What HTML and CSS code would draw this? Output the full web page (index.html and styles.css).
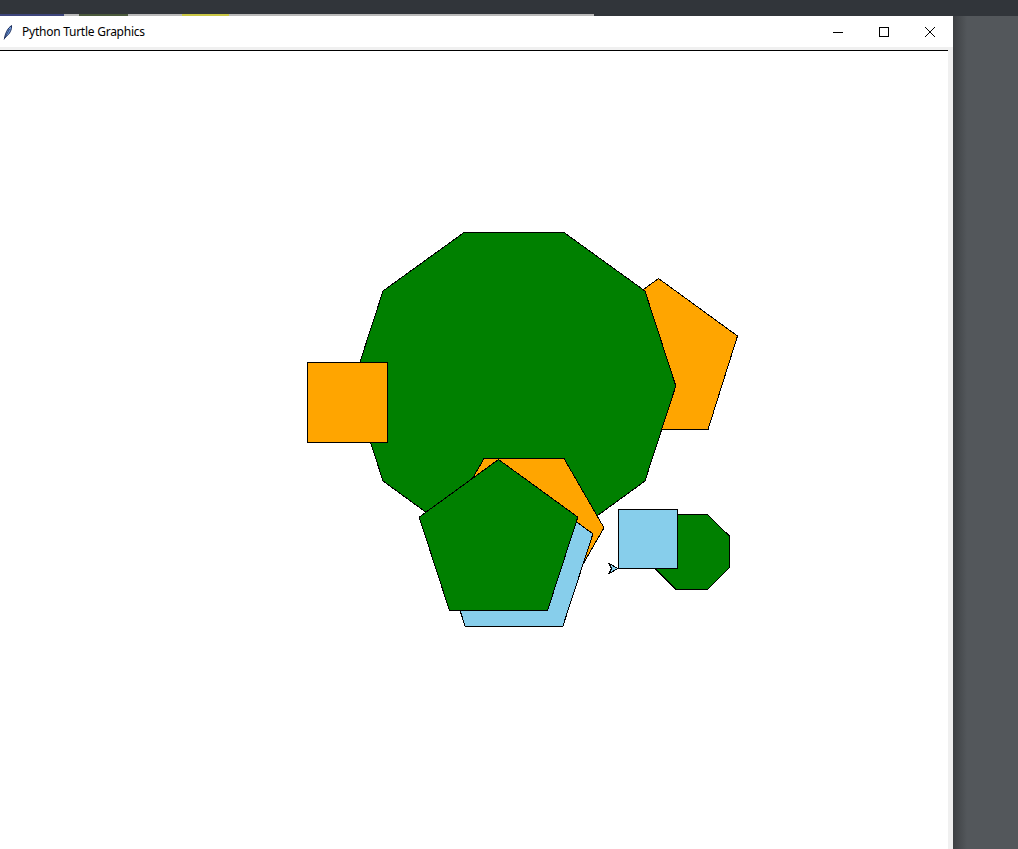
FILE: index.html
```html
<!DOCTYPE html>
<html>
<head>
<meta charset="utf-8">
<title>Python Turtle Graphics</title>
<link rel="stylesheet" href="styles.css">
</head>
<body>
<div class="topbar">
  <div class="tabs">
    <span class="tab tab-blue"></span>
    <span class="tab tab-grey w15"></span>
    <span class="tab tab-green"></span>
    <span class="tab tab-grey w54"></span>
    <span class="tab tab-yellow"></span>
    <span class="tab tab-grey w365"></span>
  </div>
</div>
<div class="main">
  <div class="window">
    <div class="titlebar">
      <svg class="app-icon" width="10" height="16" viewBox="0 0 10 16">
        <path d="M1.5 14.5 C2 10 4.5 4 8.5 1.5 C9 5.5 6.5 10.5 3 12.5 Z" fill="#6f9de0" stroke="#1f2f5c" stroke-width="1"/>
        <path d="M1 15.5 L6.5 5" stroke="#1f2f5c" stroke-width="0.8"/>
      </svg>
      <span class="title">Python Turtle Graphics</span>
      <div class="controls">
        <div class="ctl">
          <svg width="10" height="10" viewBox="0 0 10 10"><path d="M0 5.5 H10" stroke="#000" stroke-width="1"/></svg>
        </div>
        <div class="ctl">
          <svg width="10" height="10" viewBox="0 0 10 10"><rect x="0.5" y="0.5" width="9" height="9" fill="none" stroke="#000" stroke-width="1"/></svg>
        </div>
        <div class="ctl">
          <svg width="10" height="10" viewBox="0 0 10 10"><path d="M0 0 L10 10 M10 0 L0 10" stroke="#000" stroke-width="1"/></svg>
        </div>
      </div>
    </div>
    <div class="client">
      <div class="canvas">
        <svg class="drawing" width="948" height="798" viewBox="0 51 948 798">
          <polygon class="orange" points="610,429.5 708,429.5 737.5,336 658.5,278.5 579.5,336"/>
          <polygon class="green" points="675.8,386 644.9,290.9 564,232.5 464,232.5 383.1,290.9 352.2,386 383.1,481.1 464,539.9 564,539.9 644.9,481.1"/>
          <rect class="orange" x="307.5" y="362.5" width="80" height="80"/>
          <polygon class="orange" points="484,458.5 564,458.5 604,527.8 564,597.1 484,597.1 444,527.8"/>
          <polygon class="blue" points="465.25,626.5 562.75,626.5 592.9,533.8 514,476.5 435.1,533.8"/>
          <polygon class="green" points="498.5,459.5 577.8,517.1 547.5,610.5 449.5,610.5 419.2,517.1"/>
          <polygon class="green" points="676,589.5 707.3,589.5 729.5,567.4 729.5,536.1 707.3,514.5 676,514.5 653.9,536.1 653.9,567.4"/>
          <rect class="blue" x="618.5" y="509.5" width="59" height="59"/>
          <polygon class="blue" points="618,568.5 609,563.5 611.5,568.5 609,573.5"/>
        </svg>
      </div>
    </div>
  </div>
  <div class="desk"></div>
</div>
</body>
</html>
```

FILE: styles.css
```css
html, body {
  margin: 0;
  padding: 0;
}
body {
  width: 1018px;
  height: 849px;
  overflow: hidden;
  background: #53575b;
  font-family: "Noto Sans", "Liberation Sans", sans-serif;
}
.topbar {
  height: 16px;
  background: #31353a;
  display: flex;
  align-items: flex-end;
}
.tabs {
  display: flex;
  height: 2px;
}
.tab {
  display: block;
  height: 2px;
}
.tab-blue { width: 64px; background: #3d457c; }
.tab-green { width: 49px; background: #4b5a3c; }
.tab-yellow { width: 47px; background: #c9c645; }
.tab-grey { background: #b9b9b9; }
.w15 { width: 15px; }
.w54 { width: 54px; }
.w365 { width: 365px; }

.main {
  display: flex;
  height: 833px;
}
.window {
  width: 953px;
  display: flex;
  flex-direction: column;
  background: #fff;
}
.titlebar {
  height: 31px;
  display: flex;
  align-items: center;
  background: #fff;
}
.app-icon {
  margin-left: 3px;
  display: block;
}
.title {
  margin-left: 9px;
  font-size: 12px;
  letter-spacing: -0.25px;
  color: #000;
}
.controls {
  margin-left: auto;
  display: flex;
}
.ctl {
  width: 46px;
  height: 31px;
  display: flex;
  align-items: center;
  justify-content: center;
}
.ctl svg { display: block; }
.client {
  flex: 1;
  background: #f0f0f0;
  padding: 3px 5px 0 0;
  display: flex;
  min-height: 0;
}
.canvas {
  flex: 1;
  background: #fff;
  border-top: 1px solid #000;
  overflow: hidden;
}
.drawing {
  display: block;
  shape-rendering: crispEdges;
}
.drawing polygon, .drawing rect {
  stroke: #000;
  stroke-width: 1;
}
.green { fill: #008000; }
.orange { fill: #ffa500; }
.blue { fill: #87ceeb; }
.desk {
  flex: 1;
  background: linear-gradient(to right, #3d4043, #53575b 14px);
}
```
